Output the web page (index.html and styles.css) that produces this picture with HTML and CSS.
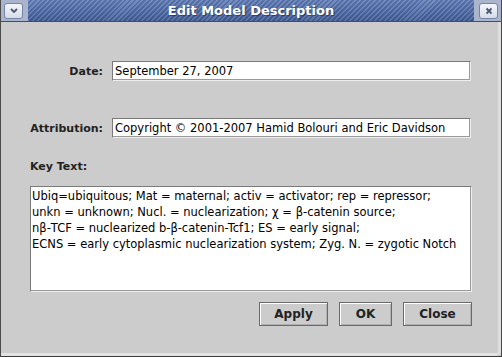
FILE: index.html
```html
<!DOCTYPE html>
<html lang="en">
<head>
    <meta charset="UTF-8">
    <title>Edit Model Description</title>
    <link rel="stylesheet" href="styles.css">
</head>
<body>

<div class="janela">
    <div class="barra-titulo">
        <div class="canto">
            <span class="botao-titulo">
                <svg width="10" height="8" viewBox="0 0 10 8"><path d="M2 2 L5 5 L8 2" fill="none" stroke="#4a5878" stroke-width="1.8"/></svg>
            </span>
        </div>
        <div class="titulo">Edit Model Description</div>
        <div class="canto">
            <span class="botao-titulo">
                <svg width="10" height="10" viewBox="0 0 10 10"><path d="M2.5 2.5 L7.5 7.5 M7.5 2.5 L2.5 7.5" fill="none" stroke="#4a5878" stroke-width="1.8"/></svg>
            </span>
        </div>
    </div>

    <div class="conteudo">
        <div class="campos">
            <label class="rotulo">Date:</label>
            <input class="entrada" type="text" value="September 27, 2007">
            <label class="rotulo">Attribution:</label>
            <input class="entrada" type="text" value="Copyright © 2001-2007 Hamid Bolouri and Eric Davidson">
        </div>

        <div class="rotulo-chave">Key Text:</div>
        <div class="area-texto">Ubiq=ubiquitous; Mat = maternal; activ = activator; rep = repressor;<br>unkn = unknown; Nucl. = nuclearization; χ = β-catenin source;<br>nβ-TCF = nuclearized b-β-catenin-Tcf1; ES = early signal;<br>ECNS = early cytoplasmic nuclearization system; Zyg. N. = zygotic Notch</div>

        <div class="botoes">
            <button class="botao largo">Apply</button>
            <button class="botao">OK</button>
            <button class="botao largo">Close</button>
        </div>
    </div>
</div>

</body>
</html>
```

FILE: styles.css
```css
body {
    margin: 0;
    padding: 0;
    font-family: 'DejaVu Sans', sans-serif;
    background: #cccccc;
}
.janela {
    width: 502px;
    height: 357px;
    box-sizing: border-box;
    border-left: 1px solid #4a4a4a;
    border-right: 1px solid #4a4a4a;
    border-bottom: 1px solid #3a3a3a;
    display: flex;
    flex-direction: column;
}
.barra-titulo {
    display: flex;
    height: 21px;
    border-bottom: 1px solid #3b4e7e;
    background: #aab5cd;
}
.canto {
    width: 25px;
    display: flex;
    align-items: center;
    justify-content: center;
}
.botao-titulo {
    width: 17px;
    height: 14px;
    border: 1px solid #7585a8;
    border-radius: 3px;
    background: linear-gradient(#f4f6fa, #d6dce8);
    display: flex;
    align-items: center;
    justify-content: center;
}
.titulo {
    flex: 1;
    margin: 0 2px;
    background:
        linear-gradient(rgba(255,255,255,0.1), rgba(0,0,0,0.12)),
        repeating-linear-gradient(135deg, #6683bb 0 1.5px, #4662a0 1.5px 3.5px);
    color: #fff;
    font-weight: bold;
    font-size: 13px;
    text-align: center;
    line-height: 21px;
    text-shadow: 1px 1px 1px rgba(20,30,60,0.6);
}
.conteudo {
    flex: 1;
    padding: 39px 27px 0 29px;
    border-right: 3px solid #dedede;
    border-bottom: 3px solid #e2e2e2;
    border-bottom-right-radius: 5px;
}
.campos {
    display: grid;
    grid-template-columns: 73px 359px;
    column-gap: 9px;
    row-gap: 37px;
    align-items: center;
}
.rotulo {
    font-weight: bold;
    font-size: 11px;
    text-align: right;
    color: #222;
}
.entrada {
    box-sizing: border-box;
    height: 20px;
    width: 359px;
    margin: 0;
    padding: 0 2px;
    border: 1px solid #7a7a7a;
    border-right-color: #eeeeee;
    border-bottom-color: #eeeeee;
    box-shadow: inset -1px -1px 0 #9a9a9a;
    background: #fff;
    font-family: 'DejaVu Sans', sans-serif;
    font-size: 11.5px;
    color: #000;
    outline: none;
}
.rotulo-chave {
    margin-top: 21px;
    font-weight: bold;
    font-size: 11px;
    line-height: 15px;
    color: #222;
}
.area-texto {
    box-sizing: border-box;
    margin-top: 12px;
    width: 442px;
    height: 106px;
    padding: 1px 1px 0;
    border: 1px solid #7a7a7a;
    border-right-color: #eeeeee;
    border-bottom-color: #eeeeee;
    box-shadow: inset -1px -1px 0 #9a9a9a;
    background: #fff;
    font-size: 11.5px;
    line-height: 16px;
    white-space: nowrap;
    overflow: hidden;
    color: #000;
}
.botoes {
    display: flex;
    justify-content: flex-end;
    gap: 11px;
    margin-top: 10px;
    width: 442px;
}
.botao {
    box-sizing: border-box;
    width: 53px;
    height: 24px;
    padding: 0;
    border: 1px solid #6a6a6a;
    box-shadow: inset 1px 1px 0 #ffffff, inset -1px -1px 0 #b0b0b0;
    background: #cccccc;
    font-family: 'DejaVu Sans', sans-serif;
    font-weight: bold;
    font-size: 12px;
    color: #222;
}
.botao.largo {
    width: 69px;
}
```
